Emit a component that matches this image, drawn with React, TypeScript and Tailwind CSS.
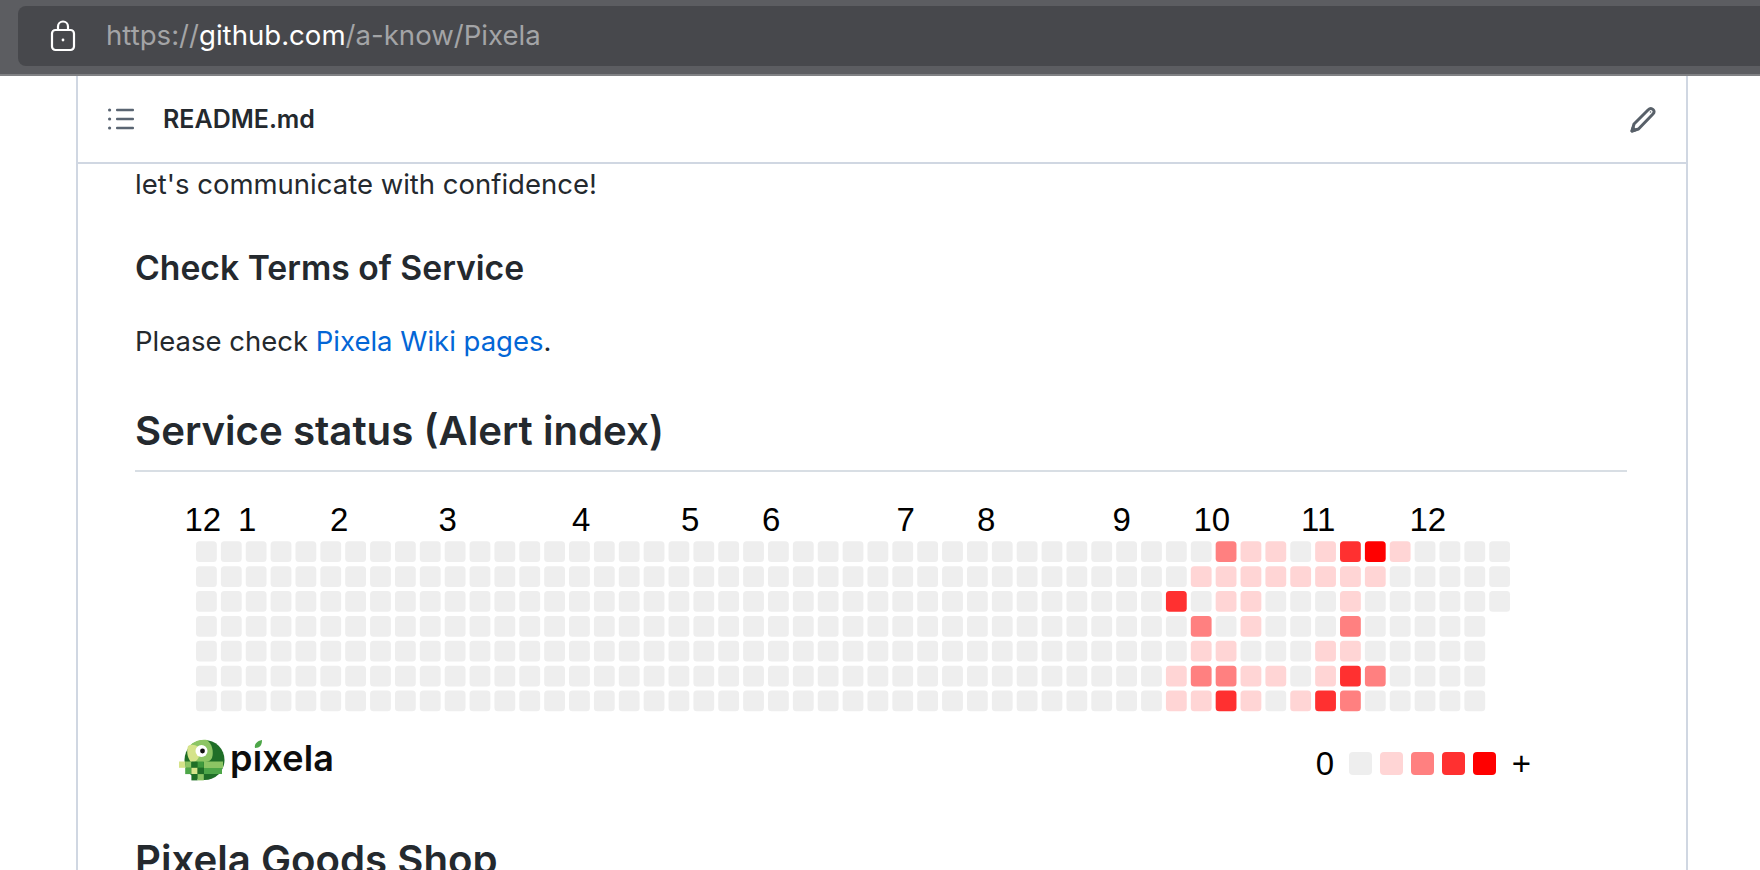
const COLORS = ["#eeeeee", "#ffd5d5", "#ff8080", "#ff3030", "#ff0000"];

const months = [
  { label: "12", x: 184.5 },
  { label: "1", x: 238 },
  { label: "2", x: 330 },
  { label: "3", x: 438.5 },
  { label: "4", x: 572 },
  { label: "5", x: 681 },
  { label: "6", x: 762 },
  { label: "7", x: 896.5 },
  { label: "8", x: 977 },
  { label: "9", x: 1112.5 },
  { label: "10", x: 1193.5 },
  { label: "11", x: 1301 },
  { label: "12", x: 1409.5 },
];

// row -> { column: level }
const levels: Record<number, number>[] = [
  { 41: 2, 42: 1, 43: 1, 45: 1, 46: 3, 47: 4, 48: 1 },
  { 40: 1, 41: 1, 42: 1, 43: 1, 44: 1, 45: 1, 46: 1, 47: 1 },
  { 39: 3, 41: 1, 42: 1, 46: 1 },
  { 40: 2, 42: 1, 46: 2 },
  { 40: 1, 41: 1, 45: 1, 46: 1 },
  { 39: 1, 40: 2, 41: 2, 42: 1, 43: 1, 45: 1, 46: 3, 47: 2 },
  { 39: 1, 40: 1, 41: 3, 42: 1, 44: 1, 45: 3, 46: 2 },
];

const logoSquares = [
  [0, 0, "#d5e38a"],
  [1, 0, "#8cc564"],
  [2, 0, "#1f6e27"],
  [3, 0, "#3f9a3e"],
  [1, 1, "#4da648"],
  [2, 1, "#d5e38a"],
  [3, 1, "#1f6e27"],
  [2, 2, "#1f6e27"],
  [3, 2, "#8cc564"],
] as const;

function PixelGraph() {
  return (
    <svg width="1400" height="245" viewBox="136 490 1400 245" className="block">
      {months.map((m, i) => (
        <text key={i} x={m.x} y={531} fontSize={33} fill="#000" fontFamily="'Liberation Sans', Arial, sans-serif">
          {m.label}
        </text>
      ))}
      {levels.map((row, r) =>
        Array.from({ length: r < 3 ? 53 : 52 }).map((_, c) => (
          <rect
            key={`${r}-${c}`}
            x={196 + c * 24.87}
            y={541.3 + r * 24.87}
            width={20.8}
            height={20.8}
            rx={3.5}
            fill={COLORS[row[c] ?? 0]}
          />
        ))
      )}
    </svg>
  );
}

function PixelaLogo() {
  return (
    <svg width="170" height="50" viewBox="175 735 170 50" className="block">
      <circle cx="204.500" cy="760" r="20" fill="#1f6e27" />
      <path d="M188 748c4-6 11-9 19-8 5 4 7 11 5 18-2 3-4 4-7 4h-14z" fill="#8cc564" />
      <path d="M188 746c5-3 12 0 12 6 0 5-3 9-6 10h-3c-3-3-5-10-3-16z" fill="#d5e38a" />
      <circle cx="201.500" cy="751" r="6" fill="#fff" />
      <circle cx="202.500" cy="751" r="2.400" fill="#111" />
      <rect x="204" y="761.500" width="19" height="6.500" fill="#8cc564" />
      <rect x="204" y="768" width="18" height="6" fill="#4da648" />
      {logoSquares.map(([c, r, fill], i) => (
        <rect key={i} x={179 + c * 6.2} y={761.500 + r * 6.300} width={6.2} height={6.3} fill={fill} />
      ))}
      <path d="M255 748c-1-4 2-7 7-8 0 5-2 8-7 8z" fill="#4da648" />
      <text x="230" y="771" fontSize={36} fontWeight={600} textLength={104} fill="#0d0d0d" fontFamily="Inter, sans-serif">
        pıxela
      </text>
    </svg>
  );
}

function Legend() {
  return (
    <div className="flex items-center mt-[12px] font-['Liberation_Sans',Arial,sans-serif] text-black">
      <span className="text-[33px] leading-none w-[33px]">0</span>
      <div className="flex gap-2">
        {COLORS.map((color) => (
          <div key={color} className="w-[23px] h-[23px] rounded" style={{ backgroundColor: color }} />
        ))}
      </div>
      <span className="text-[33px] leading-none ml-[16px]">+</span>
    </div>
  );
}

export default function App() {
  return (
    <div className="h-[870px] w-[1760px] overflow-hidden bg-white font-['Inter',sans-serif]">
      {/* Browser url bar */}
      <div className="h-[76px] bg-[#5c5d61] pt-1.5 border-b-2 border-[#808184]">
        <div className="ml-[18px] h-[60px] bg-[#47484c] rounded-l-lg flex items-center">
          <svg width="26" height="32" viewBox="0 0 26 32" fill="none" stroke="#fff" strokeWidth="2.200" className="ml-[32px] mr-[30px] -mt-[1px]">
            <rect x="2" y="10" width="22" height="20" rx="3.500" />
            <path d="M8 10V6.500a5 5 0 0 1 10 0V10" />
            <circle cx="13" cy="20" r="1.400" fill="#fff" stroke="none" />
          </svg>
          <div className="text-[27.6px] text-[#a3a4a6]">
            https://<span className="text-white">github.com</span>/a-know/Pixela
          </div>
        </div>
      </div>

      {/* Readme box */}
      <div className="ml-[76px] w-[1612px] h-[794px] border-x-2 border-[#d0d7e2] overflow-hidden">
        <div className="h-[88px] border-b-2 border-[#d0d7e2] flex items-center justify-between pl-[30px] pr-[29px]">
          <div className="flex items-center gap-[29px]">
            <svg width="26" height="22" viewBox="0 0 26 22" fill="#5a6572">
              <rect x="8" y="0.700" width="18" height="2.600" rx="1" />
              <rect x="8" y="9.700" width="18" height="2.600" rx="1" />
              <rect x="8" y="18.700" width="18" height="2.600" rx="1" />
              <circle cx="1.600" cy="2" r="1.600" />
              <circle cx="1.600" cy="11" r="1.600" />
              <circle cx="1.600" cy="20" r="1.600" />
            </svg>
            <div className="text-[25px] font-semibold text-[#24292e] mt-[1px]">README.md</div>
          </div>
          <svg width="27" height="27" viewBox="0 0 27 27" fill="none" stroke="#586069" strokeWidth="3" strokeLinejoin="round">
            <path d="M2 25l2-7L18 4c2-2 3.500-2 5-.500s1.500 3-.500 5L8.500 23z" />
            <path d="M2 25l3-1 -2-2z" fill="#586069" />
            <circle cx="20.500" cy="6" r="0.800" fill="#586069" stroke="none" />
          </svg>
        </div>

        <div className="pl-[57px] pr-[59px] text-[#24292e]">
          <p className="text-[27.5px] leading-[40px]">let's communicate with confidence!</p>
          <h3 className="text-[33.7px] font-semibold mt-[43px] leading-[42px]">Check Terms of Service</h3>
          <p className="text-[27.5px] leading-[40px] mt-[32px]">
            Please check <span className="text-[#0366d6]">Pixela Wiki pages</span>.
          </p>
          <h2 className="text-[40.2px] font-semibold mt-[42px] leading-[56px] pb-[11px] border-b-2 border-[#d8dee4]">
            Service status (Alert index)
          </h2>
          <div className="mt-[18px] ml-[1px]">
            <PixelGraph />
          </div>
          <div className="flex items-start justify-between pr-[96px]">
            <div className="ml-[40px]">
              <PixelaLogo />
            </div>
            <Legend />
          </div>
          <h2 className="text-[40.2px] font-semibold mt-[47px] leading-[56px]">Pixela Goods Shop</h2>
        </div>
      </div>
    </div>
  );
}
